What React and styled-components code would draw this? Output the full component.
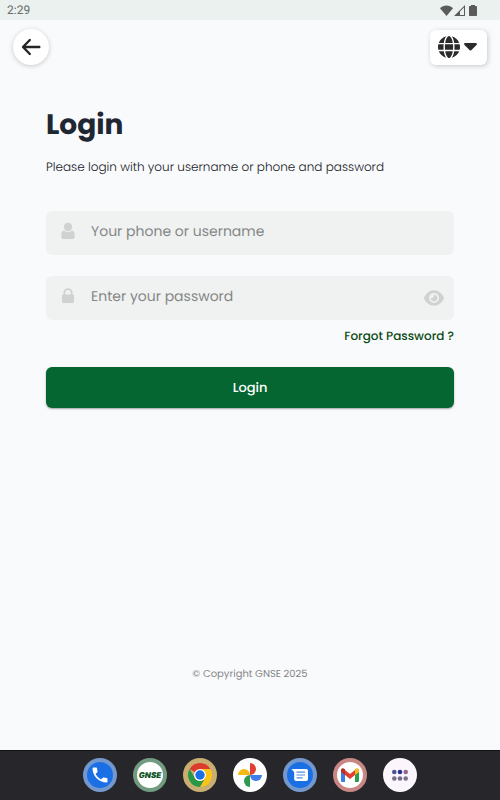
import React from "react";
import styled, { createGlobalStyle } from "styled-components";
import { FaEye, FaGlobe } from "react-icons/fa6";

const GlobalStyle = createGlobalStyle`
  * { box-sizing: border-box; }
  body {
    margin: 0;
    background: #f9fafc;
    font-family: Poppins, Inter, "Open Sans", sans-serif;
    text-rendering: geometricPrecision;
  }
  button, input { font-family: inherit; text-rendering: inherit; }
`;

const Page = styled.div`
  display: flex;
  flex-direction: column;
  min-height: 100vh;
  background: #f9fafc;
`;

const StatusBar = styled.header`
  display: flex;
  align-items: center;
  justify-content: space-between;
  height: 20px;
  padding: 0 20px 0 7px;
  background: #eaf1ef;
  color: #686c6a;
  font: 400 12px/20px Roboto, sans-serif;
`;

const StatusIcons = styled.div`
  display: flex;
  align-items: center;
  gap: 1px;
  color: #5b5b5b;
`;

const TopBar = styled.nav`
  display: flex;
  align-items: center;
  justify-content: space-between;
  padding: 9px 13px;
`;

const BackButton = styled.button`
  display: grid;
  place-items: center;
  width: 36px;
  height: 36px;
  padding: 0;
  border: 0;
  border-radius: 50%;
  background: #fff;
  box-shadow: 0 1px 5px rgba(0, 0, 0, 0.2);
`;

const LanguageButton = styled.button`
  display: flex;
  align-items: center;
  justify-content: center;
  gap: 4px;
  width: 57px;
  height: 35px;
  padding: 0 2px 0 0;
  border: 0;
  border-radius: 6px;
  background: #fff;
  color: #2b2b2d;
  box-shadow: 1px 1px 5px rgba(0, 0, 0, 0.2);
`;

const Main = styled.main`
  display: flex;
  flex: 1;
  flex-direction: column;
  padding: 31px 46px 68px;
`;

const Title = styled.h1`
  margin: 0;
  color: #1f2733;
  font-size: 28px;
  font-weight: 700;
  line-height: 40px;
`;

const Intro = styled.p`
  margin: 13px 0 33px;
  color: #17181c;
  font-size: 12px;
  font-weight: 300;
  line-height: 20px;
`;

const Form = styled.form`
  display: flex;
  flex-direction: column;
`;

const Field = styled.label`
  display: flex;
  align-items: center;
  gap: 15px;
  height: 44px;
  margin-bottom: ${(p) => (p.$last ? "7px" : "21px")};
  padding: 0 10px 0 14px;
  border-radius: 6px;
  background: #f0f2f1;
`;

const FieldIcon = styled.span`
  display: flex;
  padding-bottom: 4px;
  color: #d0d1d1;
`;

const TextInput = styled.input`
  flex: 1;
  min-width: 0;
  height: 40px;
  padding: 0 0 3px;
  border: 0;
  outline: 0;
  background: transparent;
  color: #333;
  font-size: 14px;
  &::placeholder { color: #858786; opacity: 1; }
`;

const RevealButton = styled.button`
  display: grid;
  place-items: center;
  padding: 0;
  border: 0;
  background: transparent;
  color: #d0d1d1;
`;

const ForgotLink = styled.a`
  align-self: flex-end;
  color: #0a4a14;
  font-size: 12px;
  font-weight: 500;
  line-height: 20px;
  text-decoration: none;
`;

const SubmitButton = styled.button`
  height: 41px;
  margin-top: 20px;
  padding: 0;
  border: 0;
  border-radius: 6px;
  background: #056632;
  color: #fff;
  font-size: 13px;
  font-weight: 500;
  box-shadow: 0 1px 2px rgba(0, 0, 0, 0.35);
`;

const Copyright = styled.footer`
  margin-top: auto;
  color: #858688;
  font-size: 10px;
  line-height: 16px;
  text-align: center;
`;

const Dock = styled.nav`
  display: flex;
  align-items: center;
  justify-content: center;
  gap: 16px;
  height: 50px;
  background: #27272b;
  box-shadow: inset 0 1px 0 #111114;
`;

const AppButton = styled.button`
  display: grid;
  place-items: center;
  width: 34px;
  height: 34px;
  padding: 0;
  border: ${(p) => (p.$ring ? `4px solid ${p.$ring}` : "0")};
  border-radius: 50%;
  background: ${(p) => p.$fill || "#fff"};
`;

const Brand = styled.span`
  color: #0c5424;
  font: italic 900 8px/10px Inter, sans-serif;
`;

const ArrowIcon = () => (
  <svg width="20" height="18" viewBox="0 0 20 18" fill="none" stroke="#252527" strokeWidth="2.4" strokeLinecap="round" strokeLinejoin="round">
    <path d="M8.800 2 2 9l6.800 7M2.500 9H18.300" />
  </svg>
);

const CaretIcon = () => (
  <svg width="13" height="8" viewBox="0 0 13 8" fill="currentColor">
    <path d="M1.300 0h10.400c1.100 0 1.600 1.200.8 2L7.500 7.100a1.400 1.400 0 0 1-2 0L.5 2C-.3 1.200.2 0 1.300 0Z" />
  </svg>
);

const WifiIcon = () => (
  <svg width="13" height="11" viewBox="0 0 13 11" fill="currentColor">
    <path d="M6.500 11 0 3.200C3.600-.4 9.400-.4 13 3.200Z" />
  </svg>
);

const SignalIcon = () => (
  <svg width="11" height="11" viewBox="0 0 11 11" fill="currentColor">
    <path fillRule="evenodd" d="M0 11 11 0v11ZM6 10h4V2.400l-4 4Z" />
  </svg>
);

const BatteryIcon = () => (
  <svg width="14" height="11" viewBox="3 0 14 11" fill="currentColor">
    <path d="M8 0h4v1h1.300c.4 0 .7.3.7.7v8.600c0 .4-.3.7-.7.7H6.700a.7.7 0 0 1-.7-.7V1.700c0-.4.3-.7.7-.7H8Z" />
  </svg>
);

const UserIcon = () => (
  <svg width="16" height="18" viewBox="0 0 16 18" fill="currentColor">
    <circle cx="8" cy="5" r="4.200" />
    <path d="M4 8.600a5.500 5.500 0 0 0 8 0c1.800.4 2.700 1.900 2.700 4v2.400c0 1.200-.7 2-1.900 2H3.200c-1.200 0-1.900-.8-1.900-2v-2.400c0-2.100.9-3.600 2.700-4Z" />
  </svg>
);

const LockIcon = () => (
  <svg width="16" height="18" viewBox="0 0 16 18">
    <path d="M4.300 8V5.800a3.700 3.700 0 0 1 7.400 0V8" fill="none" stroke="currentColor" strokeWidth="1.800" />
    <rect x="2" y="7.500" width="12" height="8.500" rx="1.400" fill="currentColor" />
  </svg>
);

const PhoneIcon = () => (
  <svg width="20" height="20" viewBox="0 0 24 24" fill="#fff">
    <path d="M6.620 10.790a15.050 15.050 0 0 0 6.590 6.590l2.200-2.200c.27-.27.67-.36 1.020-.24 1.120.37 2.330.57 3.570.57.550 0 1 .45 1 1V20c0 .55-.45 1-1 1C10.610 21 3 13.390 3 4c0-.55.45-1 1-1h3.500c.55 0 1 .45 1 1 0 1.250.2 2.450.57 3.570.11.350.030.74-.25 1.020Z" />
  </svg>
);

const ChromeIcon = () => (
  <svg width="26" height="26" viewBox="0 0 48 48">
    <path d="M24 24 4.900 13A22 22 0 0 1 43.100 13Z" fill="#dc3a2c" />
    <path d="M24 24V13h19.100A22 22 0 0 1 24 46l9.500-16.500Z" fill="#fbc416" />
    <path d="M4.900 13 14.500 29.500A11 11 0 0 0 33.500 29.500L24 46A22 22 0 0 1 4.900 13Z" fill="#2a9747" />
    <circle cx="24" cy="24" r="11" fill="#fff" />
    <circle cx="24" cy="24" r="8.700" fill="#1a6ee6" />
  </svg>
);

const PhotosIcon = () => (
  <svg width="26" height="26" viewBox="0 0 26 26">
    <path d="M13 1a6 6 0 0 1 0 12Z" fill="#df4032" />
    <path d="M25 13a6 6 0 0 1-12 0Z" fill="#3f7ee8" />
    <path d="M13 25a6 6 0 0 1 0-12Z" fill="#2f9950" />
    <path d="M1 13a6 6 0 0 1 12 0Z" fill="#f5b916" />
  </svg>
);

const MessagesIcon = () => (
  <svg width="18" height="16" viewBox="0 0 18 16">
    <path d="M.5 2h14.800C16.500 2 17 2.800 17 3.800V12c0 1.200-.7 2-1.900 2H5.200c-1.200 0-2-.8-2-2V5.200Z" fill="#fff" />
    <path d="M5.500 5.200h8.500M5.500 8h8.500M5.500 10.800h6" stroke="#4d8de8" strokeWidth="1.200" />
  </svg>
);

const GmailIcon = () => (
  <svg width="20" height="16" viewBox="0 0 20 16">
    <path d="M1 4.500 5 7v8H2.300C1.500 15 1 14.500 1 13.700Z" fill="#397ee5" />
    <path d="M15 7l4-2.500v9.200c0 .8-.5 1.300-1.300 1.300H15Z" fill="#2e9d4d" />
    <path d="M5 3l5 4 5-4v5l-5 4-5-4Z" fill="#e33f30" />
    <path d="M1 5V3.300C1 1.200 3.200.8 4.500 1.900L5 2.300V8Z" fill="#b7302b" />
    <path d="M19 5V3.300c0-2.100-2.200-2.500-3.500-1.400l-.5.4V8Z" fill="#f7bc18" />
  </svg>
);

const DrawerIcon = () => (
  <svg width="18" height="14" viewBox="0 0 18 14">
    <circle cx="3.300" cy="4" r="2.300" fill="#4b5592" />
    <circle cx="9" cy="4" r="2.300" fill="#2b3390" />
    <circle cx="14.700" cy="4" r="2.300" fill="#94668f" />
    <circle cx="3.300" cy="10.500" r="2.300" fill="#737087" />
    <circle cx="9" cy="10.500" r="2.300" fill="#706f88" />
    <circle cx="14.700" cy="10.500" r="2.300" fill="#75728a" />
  </svg>
);

const apps = [
  { name: "Phone", ring: "#7398cd", fill: "#1b6fe5", icon: <PhoneIcon /> },
  { name: "GNSE", ring: "#729b82", icon: <Brand>GNSE</Brand> },
  { name: "Chrome", ring: "#c8ae70", fill: "#c8ae70", icon: <ChromeIcon /> },
  { name: "Photos", icon: <PhotosIcon /> },
  { name: "Messages", ring: "#7398cd", fill: "#1b6fe5", icon: <MessagesIcon /> },
  { name: "Gmail", ring: "#c88784", icon: <GmailIcon /> },
  { name: "All apps", fill: "#fbf5fc", icon: <DrawerIcon /> },
];

export default function App() {
  return (
    <Page>
      <GlobalStyle />
      <StatusBar>
        <time>2:29</time>
        <StatusIcons>
          <WifiIcon />
          <SignalIcon />
          <BatteryIcon />
        </StatusIcons>
      </StatusBar>
      <TopBar>
        <BackButton aria-label="Back"><ArrowIcon /></BackButton>
        <LanguageButton aria-label="Choose language">
          <FaGlobe size={22} />
          <CaretIcon />
        </LanguageButton>
      </TopBar>
      <Main>
        <Title>Login</Title>
        <Intro>Please login with your username or phone and password</Intro>
        <Form onSubmit={(e) => e.preventDefault()}>
          <Field>
            <FieldIcon><UserIcon /></FieldIcon>
            <TextInput type="text" placeholder="Your phone or username" aria-label="Your phone or username" />
          </Field>
          <Field $last>
            <FieldIcon><LockIcon /></FieldIcon>
            <TextInput type="password" placeholder="Enter your password" aria-label="Enter your password" />
            <RevealButton type="button" aria-label="Show password"><FaEye size={20} /></RevealButton>
          </Field>
          <ForgotLink href="#forgot">Forgot Password ?</ForgotLink>
          <SubmitButton type="submit">Login</SubmitButton>
        </Form>
        <Copyright>© Copyright GNSE 2025</Copyright>
      </Main>
      <Dock aria-label="Apps">
        {apps.map((app) => (
          <AppButton key={app.name} aria-label={app.name} $ring={app.ring} $fill={app.fill}>
            {app.icon}
          </AppButton>
        ))}
      </Dock>
    </Page>
  );
}
